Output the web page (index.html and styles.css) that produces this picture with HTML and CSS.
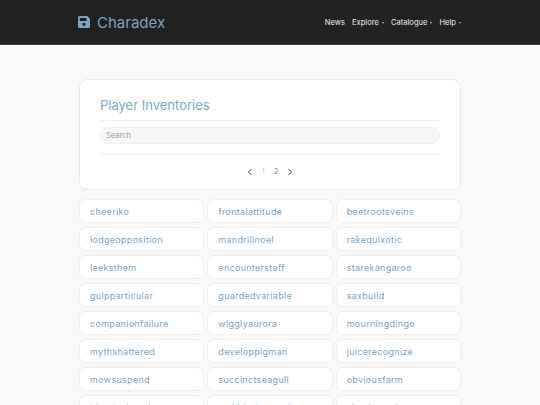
FILE: index.html
```html
<!DOCTYPE html>
<html lang="en">
<head>
<meta charset="utf-8">
<title>Charadex</title>
<link rel="stylesheet" href="styles.css">
</head>
<body>
<header class="topbar">
  <div class="wrap topbar-inner">
    <a class="brand">
      <svg class="brand-icon" viewBox="0 0 448 448"><path fill="#7ba7c9" fill-rule="evenodd" d="M60 0H330a40 40 0 0 1 28 12l78 78a40 40 0 0 1 12 28V388a60 60 0 0 1-60 60H60a60 60 0 0 1-60-60V60A60 60 0 0 1 60 0zM80 70a14 14 0 0 0-14 14V170a14 14 0 0 0 14 14H300a14 14 0 0 0 14-14V84a14 14 0 0 0-14-14zM224 250a62 62 0 1 0 0 124 62 62 0 1 0 0-124z"/></svg>
      <span>Charadex</span>
    </a>
    <nav class="menu">
      <a>News</a>
      <a class="drop">Explore</a>
      <a class="drop">Catalogue</a>
      <a class="drop">Help</a>
    </nav>
  </div>
</header>
<main class="wrap">
  <section class="panel">
    <h1>Player Inventories</h1>
    <div class="search-row"><input class="search" placeholder="Search"></div>
    <div class="pager">
      <svg class="chev" viewBox="0 0 6 8"><path d="M4.500 1L1.500 4l3 3"/></svg>
      <span class="page current">1</span>
      <span class="page">2</span>
      <svg class="chev" viewBox="0 0 6 8"><path d="M1.500 1l3 3-3 3"/></svg>
    </div>
  </section>
  <section class="grid">
    <a class="item">cheeriko</a><a class="item">frontalattitude</a><a class="item">beetrootsveins</a>
    <a class="item">lodgeopposition</a><a class="item">mandrillnoel</a><a class="item">rakequixotic</a>
    <a class="item">leeksthem</a><a class="item">encounterstaff</a><a class="item">starekangaroo</a>
    <a class="item">gulpparticular</a><a class="item">guardedvariable</a><a class="item">saxbuild</a>
    <a class="item">companionfailure</a><a class="item">wigglyaurora</a><a class="item">mourningdingo</a>
    <a class="item">mythshattered</a><a class="item">developpigman</a><a class="item">juicerecognize</a>
    <a class="item">mowsuspend</a><a class="item">succinctseagull</a><a class="item">obviousfarm</a>
    <a class="item">identicalmonk</a><a class="item">wobblerjumpsuit</a><a class="item">shockspeak</a>
  </section>
</main>
</body>
</html>
```
FILE: styles.css
```css
* { box-sizing: border-box; }
html, body { margin: 0; height: 405px; overflow: hidden; }
body { background: #f8f8f8; font-family: "Inter", "Liberation Sans", sans-serif; color: #555; }
.wrap { width: 382px; margin: 0 auto; }
.topbar { height: 45px; background: #222; border-bottom: 1px solid #444; }
.topbar-inner { height: 44px; display: flex; align-items: center; justify-content: space-between; }
.brand { display: flex; align-items: center; gap: 7px; margin-left: -1px; color: #7ba3c2; font-size: 15px; }
.brand-icon { width: 12px; height: 12px; }
.menu { display: flex; gap: 7px; font-size: 7.500px; letter-spacing: .05px; color: #eee; }
.drop::after { content: ""; display: inline-block; margin-left: 3px; vertical-align: 1px; border: 1.500px solid transparent; border-top: 2px solid #aaa; border-bottom-width: 0; }
main { padding-top: 34px; }
.panel { height: 111px; background: #fff; border: 1px solid #eaeaea; border-radius: 8px; padding: 0 20px; }
h1 { margin: 0; padding: 15px 0 0; height: 41px; font-weight: 400; font-size: 13px; line-height: 20px; color: #7ba7c9; border-bottom: 1px solid #eee; }
.search-row { padding: 6px 0; height: 33px; border-bottom: 1px solid #eee; }
.search { display: block; width: 100%; height: 17px; border: 1px solid #eee; border-radius: 9px; background: #f6f6f6; padding: 0 5px; font: 7.500px "Inter", sans-serif; outline: 0; }
.search::placeholder { color: #999; }
.pager { display: flex; justify-content: center; align-items: center; gap: 9px; height: 35px; font-size: 7.500px; color: #777; }
.chev { width: 6px; height: 8px; fill: none; stroke: #444; stroke-width: 1; }
.current { color: #bcd0e0; }
.grid { margin-top: 9px; display: grid; grid-template-columns: repeat(3, 1fr); gap: 4px 3px; }
.item { display: block; height: 24px; line-height: 23px; padding-left: 10px; background: #fff; border: 1px solid #eee; border-radius: 7px; color: #7ba3c2; font-size: 9px; letter-spacing: .3px; }
```
